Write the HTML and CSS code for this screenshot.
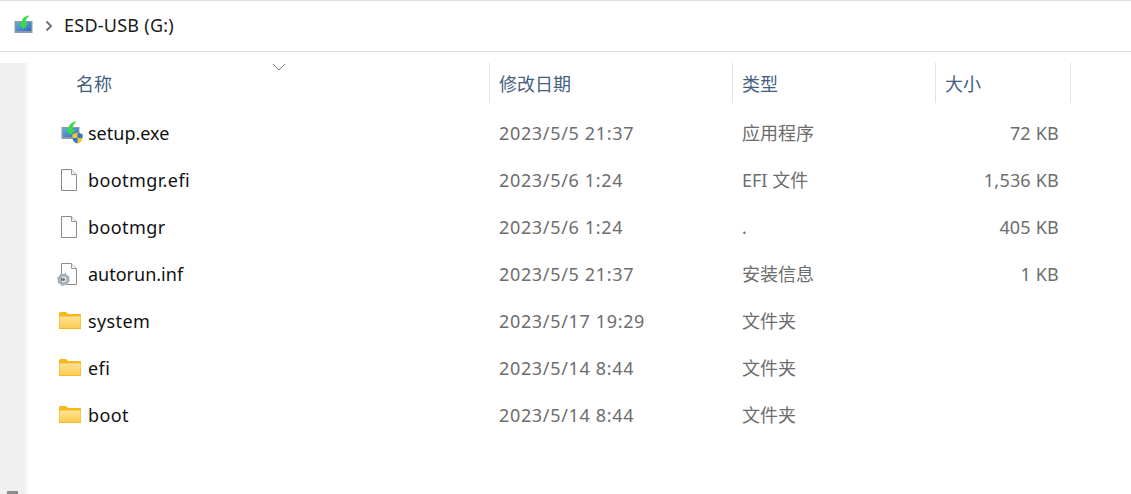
FILE: index.html
```html
<!DOCTYPE html>
<html lang="zh-CN">
<head>
<meta charset="utf-8">
<title>ESD-USB (G:)</title>
<link rel="stylesheet" href="styles.css">
</head>
<body>
<svg class="defs" width="0" height="0" aria-hidden="true">
  <defs>
    <linearGradient id="fold" x1="0" y1="0" x2="0" y2="1"><stop offset="0" stop-color="#ffe394"/><stop offset="1" stop-color="#fdcb52"/></linearGradient>
    <linearGradient id="scr" x1="0" y1="0" x2="1" y2="1"><stop offset="0" stop-color="#6fa8dc"/><stop offset="1" stop-color="#2a6fc0"/></linearGradient>
    <symbol id="doc" viewBox="0 0 18 24">
      <path d="M1.5 1.5H11.5L16.5 6.5V22.5H1.5Z" fill="#fdfdfd" stroke="#8a8a8a" stroke-width="1"/>
      <path d="M11.5 1.5V6.5H16.5" fill="#f3f3f3" stroke="#9a9a9a" stroke-width="1"/>
    </symbol>
    <symbol id="folder" viewBox="0 0 22 18">
      <path d="M0 2.5Q0 1 1.5 1H7L9 3H22V17H0Z" fill="#f6b81f"/>
      <path d="M0 5H8.5L9.5 3.8H22V18H0Z" fill="#f6b81f"/>
      <rect x="0.5" y="5.5" width="21" height="11.5" fill="url(#fold)"/>
    </symbol>
    <symbol id="drive" viewBox="0 0 20 18">
      <rect x="0.5" y="6" width="18" height="12" fill="#8d9aa6"/>
      <rect x="1.8" y="7" width="15.4" height="9" fill="url(#scr)"/>
      <path d="M15.5 0.5C10.5 1 7.5 4 7.2 8.5H4.5L9.5 14L14.5 8.5H11.3C11.3 5.5 12.8 3 15.5 0.5Z" fill="#38dc48"/>
    </symbol>
  </defs>
</svg>
<div class="app">
  <header class="crumb">
    <svg class="crumb-icon"><use href="#drive"/></svg>
    <svg class="crumb-sep" viewBox="0 0 8 12"><path d="M1.5 1.5L6 6L1.5 10.5" fill="none" stroke="#6e6e6e" stroke-width="1.8"/></svg>
    <span class="crumb-text">ESD-USB (G:)</span>
  </header>
  <main class="body">
    <aside class="rail"><div class="thumb"></div></aside>
    <div class="rail-edge"></div>
    <section class="list">
      <div class="head">
        <div class="hc hc-name">名称
          <svg class="sort" viewBox="0 0 14 8"><path d="M1 1L7 7L13 1" fill="none" stroke="#777" stroke-width="1"/></svg>
        </div>
        <div class="hc hc-sep">修改日期</div>
        <div class="hc hc-sep">类型</div>
        <div class="hc hc-sep hc-end">大小</div>
      </div>
      <div class="row">
        <div class="name name-tight"><span class="ic">
          <svg class="ic-main"><use href="#drive"/></svg>
          <svg class="ic-badge" viewBox="0 0 12 13"><path d="M6 0.5L11.5 2.5V6.5C11.5 9.5 9 11.5 6 12.5C3 11.5 0.5 9.5 0.5 6.5V2.5Z" fill="#f7c52b"/><path d="M6 0.5L11.5 2.5V6.5H6ZM6 6.5V12.5C3 11.5 0.5 9.5 0.5 6.5Z" fill="#2a78d0"/></svg>
        </span>setup.exe</div>
        <div class="cell date">2023/5/5 21:37</div><div class="cell type">应用程序</div><div class="cell size">72 KB</div>
      </div>
      <div class="row">
        <div class="name"><span class="ic"><svg class="ic-doc"><use href="#doc"/></svg></span>bootmgr.efi</div>
        <div class="cell date">2023/5/6 1:24</div><div class="cell type">EFI 文件</div><div class="cell size">1,536 KB</div>
      </div>
      <div class="row">
        <div class="name"><span class="ic"><svg class="ic-doc"><use href="#doc"/></svg></span>bootmgr</div>
        <div class="cell date">2023/5/6 1:24</div><div class="cell">.</div><div class="cell size">405 KB</div>
      </div>
      <div class="row">
        <div class="name name-tight"><span class="ic">
          <svg class="ic-doc"><use href="#doc"/></svg>
          <svg class="ic-gear" viewBox="0 0 14 14"><circle cx="7" cy="7" r="4.6" fill="none" stroke="#a9b2ba" stroke-width="3.4"/><circle cx="7" cy="7" r="6" fill="none" stroke="#a9b2ba" stroke-width="1.8" stroke-dasharray="2.2 2.5"/><circle cx="7" cy="7" r="1.8" fill="#6f7880"/></svg>
        </span>autorun.inf</div>
        <div class="cell date">2023/5/5 21:37</div><div class="cell type">安装信息</div><div class="cell size">1 KB</div>
      </div>
      <div class="row">
        <div class="name"><span class="ic"><svg class="ic-folder"><use href="#folder"/></svg></span>system</div>
        <div class="cell date">2023/5/17 19:29</div><div class="cell type">文件夹</div><div class="cell size"></div>
      </div>
      <div class="row">
        <div class="name"><span class="ic"><svg class="ic-folder"><use href="#folder"/></svg></span>efi</div>
        <div class="cell date">2023/5/14 8:44</div><div class="cell type">文件夹</div><div class="cell size"></div>
      </div>
      <div class="row">
        <div class="name"><span class="ic"><svg class="ic-folder"><use href="#folder"/></svg></span>boot</div>
        <div class="cell date">2023/5/14 8:44</div><div class="cell type">文件夹</div><div class="cell size"></div>
      </div>
    </section>
  </main>
</div>
</body>
</html>
```
FILE: styles.css
```css
* { box-sizing: border-box; }
html, body { margin: 0; height: 100%; background: #fff; overflow: hidden; }
body { font-family: "Noto Sans", "Noto Sans CJK SC", sans-serif; font-size: 18px; color: #111; }
.defs { position: absolute; }
.app { height: 494px; display: flex; flex-direction: column; }
.crumb { height: 52px; flex: none; display: flex; align-items: center; padding-left: 14px; border-top: 1px solid #dcdcdc; border-bottom: 1px solid #dedede; }
.crumb-icon { width: 20px; height: 18px; margin-top: -4px; }
.crumb-sep { width: 8px; height: 12px; margin-left: 11px; }
.crumb-text { margin-left: 11px; margin-bottom: 2px; line-height: 24px; letter-spacing: 0.25px; color: #1a1a1a; }
.body { flex: 1; display: flex; padding-top: 11px; min-height: 0; }
.rail { width: 25px; flex: none; background: #f0f0f0; display: flex; flex-direction: column; justify-content: flex-end; align-items: center; }
.thumb { width: 11px; height: 3px; background: #8c8c8c; }
.rail-edge { width: 3px; flex: none; background: #f7f7f7; }
.list { flex: 1; min-width: 0; }
.head, .row { display: grid; grid-template-columns: 461px 243px 203px 136px; }
.head { height: 40px; margin-bottom: 6px; color: #44607f; }
.hc { position: relative; display: flex; align-items: center; height: 40px; padding: 1px 0 0 9px; line-height: 40px; }
.hc-name { padding-left: 48px; }
.hc-sep { border-left: 1px solid #e2e2e2; }
.hc-end { border-right: 1px solid #e2e2e2; }
.sort { position: absolute; left: 244px; top: 0; width: 14px; height: 8px; }
.row { height: 47px; align-items: center; color: #6d6d6d; }
.name { display: flex; align-items: center; color: #111; padding-left: 30px; letter-spacing: 0.4px; }
.name-tight { letter-spacing: 0; }
.cell { padding-left: 10px; }
.date { letter-spacing: 0.66px; }
.type { margin-top: -2px; }
.size { text-align: right; padding-right: 12px; letter-spacing: 0.2px; }
.ic { position: relative; width: 30px; height: 24px; flex: none; display: block; }
.ic-main { position: absolute; left: 3px; top: 0; width: 20px; height: 18px; }
.ic-badge { position: absolute; left: 14px; top: 11px; width: 11px; height: 12px; }
.ic-doc { position: absolute; left: 2px; top: 0; width: 18px; height: 24px; }
.ic-gear { position: absolute; left: -1px; top: 11px; width: 13px; height: 13px; }
.ic-folder { position: absolute; left: 1px; top: 2px; width: 22px; height: 18px; }
```
